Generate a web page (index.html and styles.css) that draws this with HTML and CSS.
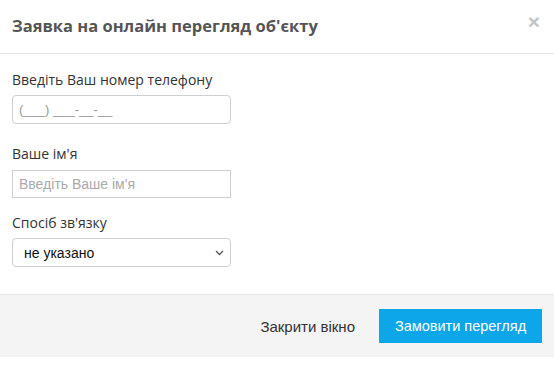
FILE: index.html
```html
<!DOCTYPE html>
<html lang="uk">
<head>
<meta charset="utf-8">
<link rel="stylesheet" href="styles.css">
</head>
<body>
<div class="modal">
  <div class="modal-header">
    <h4 class="modal-title">Заявка на онлайн перегляд об'єкту</h4>
    <button class="close" type="button">×</button>
  </div>
  <div class="modal-body">
    <div class="field field-phone">
      <label class="field-label">Введіть Ваш номер телефону</label>
      <input class="input input-rounded" type="text" placeholder="(___) ___-__-__">
    </div>
    <div class="field field-name">
      <label class="field-label">Ваше ім'я</label>
      <input class="input input-square" type="text" placeholder="Введіть Ваше ім'я">
    </div>
    <div class="field">
      <label class="field-label">Спосіб зв'язку</label>
      <div class="select">
        <span class="select-value">не указано</span>
        <svg class="select-arrow" width="9" height="6" viewBox="0 0 9 6"><path d="M1 1 L4.5 4.5 L8 1" fill="none" stroke="#555" stroke-width="1.3"/></svg>
      </div>
    </div>
  </div>
  <div class="modal-footer">
    <button class="btn btn-link" type="button">Закрити вікно</button>
    <button class="btn btn-primary" type="button">Замовити перегляд</button>
  </div>
</div>
</body>
</html>
```
FILE: styles.css
```css
html, body {
  margin: 0;
  padding: 0;
  background: #fff;
}
.modal {
  width: 554px;
  font-family: "Open Sans", "Liberation Sans", sans-serif;
}
.modal-header {
  height: 54px;
  box-sizing: border-box;
  border-bottom: 1px solid #e5e5e5;
  padding: 0 12px;
  display: flex;
  align-items: center;
  justify-content: space-between;
}
.modal-title {
  margin: 0;
  font-size: 16.5px;
  font-weight: 700;
  color: #555;
  line-height: 24px;
  padding-bottom: 1px;
  white-space: nowrap;
}
.close {
  border: 0;
  background: none;
  padding: 0;
  margin: 0 2px 10px 0;
  font-family: "Liberation Sans", Arial, sans-serif;
  font-size: 21px;
  font-weight: 700;
  line-height: 1;
  color: #c4c4c4;
}
.modal-body {
  padding: 16px 12px 27px;
}
.field-label {
  display: block;
  font-size: 14px;
  line-height: 20px;
  color: #333;
  margin-bottom: 5px;
}
.field-phone { margin-bottom: 20px; }
.field-name { margin-bottom: 15px; }
.field-name .field-label { margin-bottom: 6px; }
.field .field-label + .select { margin-top: 1px; }
.input {
  display: block;
  box-sizing: border-box;
  width: 219px;
  margin: 0;
  border: 1px solid #cfcfcf;
  background: #fff;
  font-family: "Liberation Sans", Arial, sans-serif;
  font-size: 14px;
  padding: 0 6px;
  color: #333;
  outline: none;
}
.input-rounded {
  height: 29px;
  border-radius: 4px;
  font-size: 13px;
}
.input-square {
  height: 28px;
  border-radius: 0;
}
.input::placeholder {
  color: #aaa;
}
.input-rounded::placeholder {
  color: #999;
}
.select {
  box-sizing: border-box;
  width: 219px;
  height: 29px;
  border: 1px solid #cfcfcf;
  border-radius: 4px;
  display: flex;
  align-items: center;
  justify-content: space-between;
  padding: 0 6px 0 11px;
  font-family: "Liberation Sans", Arial, sans-serif;
  font-size: 14px;
  color: #111;
}
.modal-footer {
  border-top: 1px solid #e5e5e5;
  background: #f4f4f4;
  height: 63px;
  box-sizing: border-box;
  display: flex;
  align-items: center;
  justify-content: flex-end;
  padding: 0 12px;
}
.btn {
  font-family: "Liberation Sans", Arial, sans-serif;
  font-size: 15px;
  height: 34px;
  border: 0;
  padding: 0;
  white-space: nowrap;
  cursor: pointer;
}
.btn-link {
  background: transparent;
  color: #333;
  padding: 0 12px;
  margin-right: 12px;
}
.btn-primary {
  background: #0ca6e9;
  color: #fff;
  width: 163px;
  font-size: 14.5px;
}
```
